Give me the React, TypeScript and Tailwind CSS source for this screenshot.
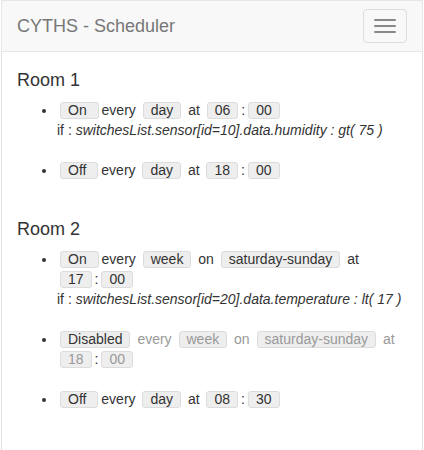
import type { ReactNode } from 'react';

const Box = ({ children, dim }: { children: ReactNode; dim?: boolean }) => (
  <span
    className={
      'inline-block mx-[3px] px-[7px] leading-[15px] rounded-[3px] border border-[#dcdcdc] bg-[#eee] ' +
      (dim ? 'text-[#999]' : 'text-[#333]')
    }
  >
    {children}
  </span>
);

const Time = ({ h, m, dim }: { h: string; m: string; dim?: boolean }) => (
  <span className="inline-block whitespace-nowrap">
    <Box dim={dim}>{h}</Box>:<Box dim={dim}>{m}</Box>
  </span>
);

const Cond = ({ expr }: { expr: string }) => (
  <>
    <br />
    if : <i>{expr}</i>
  </>
);

const App = () => {
  return (
    <div className="ml-[1px] w-[422px] font-['Liberation_Sans',Arial,sans-serif] text-[14px] leading-[20px] text-[#333]">
      <nav className="h-[52px] flex justify-between items-start bg-[#f8f8f8] border border-[#e7e7e7]">
        <div className="pl-[15px] pt-[15px] text-[18px] leading-[20px] text-[#777]">CYTHS - Scheduler</div>
        <button className="mt-[8px] mr-[15px] px-[10px] py-[9px] border border-[#ddd] rounded-[4px] flex flex-col gap-[4px]">
          <span className="block w-[22px] h-[2px] rounded-[1px] bg-[#888]" />
          <span className="block w-[22px] h-[2px] rounded-[1px] bg-[#888]" />
          <span className="block w-[22px] h-[2px] rounded-[1px] bg-[#888]" />
        </button>
      </nav>

      <main className="min-h-[398px] px-[15px] pt-[18px] border-x border-[#e3e3e3]">
        <h4 className="text-[18px] leading-[20px] mb-[10px]">Room 1</h4>
        <ul className="list-disc pl-[40px]">
          <li className="mb-[20px]">
            <Box>On{'\u00a0'}</Box>every <Box>day</Box> at <Time h="06" m="00" />
            <Cond expr="switchesList.sensor[id=10].data.humidity : gt( 75 )" />
          </li>
          <li className="mb-[20px]">
            <Box>Off{'\u00a0'}</Box>every <Box>day</Box> at <Time h="18" m="00" />
          </li>
        </ul>

        <h4 className="mt-[39px] text-[18px] leading-[20px] mb-[10px]">Room 2</h4>
        <ul className="list-disc pl-[40px]">
          <li className="mb-[20px]">
            <Box>On{'\u00a0'}</Box>every <Box>week</Box> on <Box>saturday-sunday</Box> at <Time h="17" m="00" />
            <Cond expr="switchesList.sensor[id=20].data.temperature : lt( 17 )" />
          </li>
          <li className="mb-[20px]">
            <Box>Disabled</Box> <span className="text-[#999]">every</span> <Box dim>week</Box>{' '}
            <span className="text-[#999]">on</span> <Box dim>saturday-sunday</Box>{' '}
            <span className="text-[#999]">at</span> <Time h="18" m="00" dim />
          </li>
          <li className="mb-[20px]">
            <Box>Off{'\u00a0'}</Box>every <Box>day</Box> at <Time h="08" m="30" />
          </li>
        </ul>
      </main>
    </div>
  );
};

export default App;
